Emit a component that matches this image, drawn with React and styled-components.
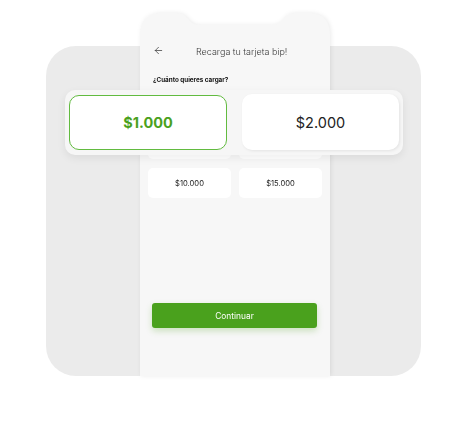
import React from 'react';
import styled, { createGlobalStyle } from 'styled-components';
import { ArrowLeft } from 'lucide-react';

const COLORS = {
  backdrop: '#ebebeb',
  phone: '#f7f7f7',
  green: '#4aa11d',
  text: '#222222',
};

const GlobalStyle = createGlobalStyle`
  html, body {
    margin: 0;
    padding: 0;
    background: #ffffff;
    font-family: Inter, "Liberation Sans", sans-serif;
  }
`;

const Stage = styled.div`
  position: relative;
  width: 466px;
  height: 421px;
  overflow: hidden;
  padding: 46px 0 0 46px;
  box-sizing: border-box;
`;

const Backdrop = styled.div`
  width: 375px;
  height: 330px;
  border-radius: 30px;
  background: ${COLORS.backdrop};
`;

const PhoneShadow = styled.div`
  position: absolute;
  left: 140px;
  top: 13px;
  width: 190px;
  height: 363px;
  filter: drop-shadow(1px 0 2px rgba(0, 0, 0, 0.08));
`;

const Phone = styled.div`
  width: 100%;
  height: 100%;
  background: ${COLORS.phone};
  clip-path: path('M0,22 Q0,0 22,0 L36,0 Q44,0 48,6 Q52,12 60,12 L131,12 Q139,12 143,6 Q147,0 155,0 L168,0 Q190,0 190,22 L190,363 L0,363 Z');
  display: flex;
  flex-direction: column;
  padding: 32px 12px 48px 12px;
  box-sizing: border-box;
`;

const Header = styled.div`
  position: relative;
  display: flex;
  align-items: center;
  height: 12px;
  color: #3a3a3a;
  font-size: 9px;
  font-weight: 300;
  span {
    margin-left: 44px;
  }
  svg {
    position: absolute;
    left: 1px;
    top: 0;
  }
`;

const Question = styled.div`
  margin-top: 19px;
  padding-left: 1px;
  font-size: 6.3px;
  font-weight: 700;
  color: #111;
`;

const AmountGrid = styled.div`
  display: grid;
  grid-template-columns: 1fr 1fr;
  gap: 9px 8px;
  margin: 45px -4px 0 -4px;
`;

const SmallCard = styled.div`
  height: 30px;
  border-radius: 5px;
  background: #ffffff;
  display: flex;
  align-items: center;
  justify-content: center;
  font-size: 7.6px;
  color: ${COLORS.text};
`;

const ContinueButton = styled.button`
  margin-top: auto;
  align-self: flex-start;
  width: 165px;
  height: 25px;
  border: none;
  border-radius: 3px;
  background: ${COLORS.green};
  color: #ffffff;
  font-family: inherit;
  font-size: 8.4px;
  box-shadow: 0 3px 6px rgba(74, 161, 29, 0.25);
`;

const Zoomed = styled.div`
  position: absolute;
  left: 65px;
  top: 90px;
  width: 338px;
  height: 65px;
  box-sizing: border-box;
  padding: 5px 4px 5px 4px;
  border-radius: 10px;
  background: #f6f6f6;
  box-shadow: 0 3px 8px rgba(0, 0, 0, 0.07);
  display: grid;
  grid-template-columns: 158px 157px;
  justify-content: space-between;
`;

const BigCard = styled.div`
  border-radius: 10px;
  background: #ffffff;
  display: flex;
  align-items: center;
  justify-content: center;
  font-size: 14.5px;
  font-weight: ${props => props.active ? 700 : 400};
  color: ${props => props.active ? COLORS.green : COLORS.text};
  border: ${props => props.active ? `1.5px solid #62bb40` : `1.5px solid transparent`};
  box-shadow: ${props => props.active ? `none` : `1px 1px 3px rgba(0, 0, 0, 0.08)`};
  margin-top: ${props => props.active ? `0` : `-1px`};
`;

export default function App() {
  return (
    <>
      <GlobalStyle />
      <Stage>
        <Backdrop />
        <PhoneShadow>
          <Phone>
            <Header>
              <ArrowLeft size={11} strokeWidth={1.6} />
              <span>Recarga tu tarjeta bip!</span>
            </Header>
            <Question>¿Cuánto quieres cargar?</Question>
            <AmountGrid>
              <SmallCard>$1.000</SmallCard>
              <SmallCard>$2.000</SmallCard>
              <SmallCard>$10.000</SmallCard>
              <SmallCard>$15.000</SmallCard>
            </AmountGrid>
            <ContinueButton type="button">Continuar</ContinueButton>
          </Phone>
        </PhoneShadow>
        <Zoomed>
          <BigCard active>$1.000</BigCard>
          <BigCard>$2.000</BigCard>
        </Zoomed>
      </Stage>
    </>
  );
}
